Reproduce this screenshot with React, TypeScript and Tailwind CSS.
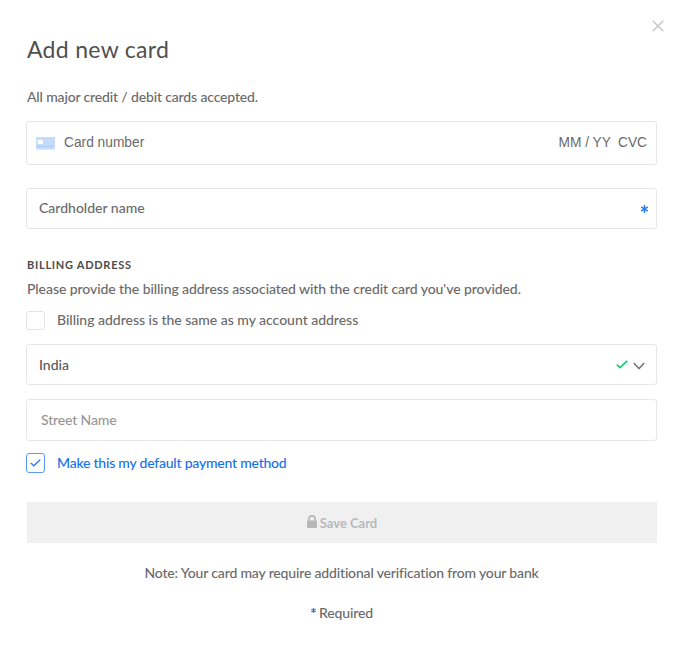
import type { ReactNode } from "react";

function Field({ className, children }: { className: string; children: ReactNode }) {
  return (
    <div className={`flex items-center rounded-[3px] border border-[#e7e7e7] bg-white ${className}`}>
      {children}
    </div>
  );
}

function CardIcon() {
  return (
    <svg width="19" height="13" viewBox="0 0 19 13" className="shrink-0">
      <rect width="19" height="12.5" rx="1" fill="#c4dcfc" />
      <rect x="1.5" y="2.8" width="5.5" height="4.2" rx="1.2" fill="#ffffff" />
      <path d="M1.5 9.5h3M5.7 9.5h3M9.9 9.5h3M14.1 9.5h3" stroke="#a9c6ee" strokeWidth="1.2" />
    </svg>
  );
}

export default function App() {
  return (
    <main className="flex h-[648px] w-[680px] flex-col bg-white pr-[23px] pl-[26px] font-['Lato',sans-serif] text-[14px] leading-5 font-medium text-[#6a6a6a]">
      <header className="flex h-[87px] shrink-0 justify-between">
        <h1 className="mt-[34px] ml-px text-[23px] leading-[30px] font-normal tracking-[0.3px] text-[#505050]">Add new card</h1>
        <button aria-label="Close" className="mt-5 mr-[-7px] h-3 w-3">
          <svg width="12" height="12" viewBox="0 0 12 12" fill="none" stroke="#c6c6c6" strokeWidth="1.5">
            <path d="M.7.7l10.6 10.6M11.3.7L.7 11.3" />
          </svg>
        </button>
      </header>
      <p className="ml-px tracking-[-0.15px]">All major credit / debit cards accepted.</p>
      <Field className="mt-[14px] h-[44px] shrink-0 pr-[9px] pl-[9px] font-['Liberation_Sans',sans-serif] text-[13.75px] font-normal">
        <CardIcon />
        <span className="mb-px ml-[9px]">Card number</span>
        <span className="mb-px ml-auto">MM / YY</span>
        <span className="mb-px ml-[7px]">CVC</span>
      </Field>
      <Field className="mt-[23px] h-[41px] shrink-0 justify-between pr-[8px] pl-3">
        <span className="mb-0.5">Cardholder name</span>
        <svg width="7" height="8" viewBox="0 0 7 8" stroke="#2f80ee" strokeWidth="1.5">
          <path d="M3.5 0v8M.2 2l6.6 4M6.8 2L.2 6" />
        </svg>
      </Field>
      <h2 className="mt-[26px] ml-px text-[11px] font-bold tracking-[0.73px] text-[#4c4c4c]">BILLING ADDRESS</h2>
      <p className="mt-1 ml-px tracking-[-0.075px]">Please provide the billing address associated with the credit card you've provided.</p>
      <div className="mt-[11px] flex h-5 items-center">
        <span className="h-[19px] w-[19px] rounded-[3px] border border-[#e5e5e5]" />
        <span className="ml-3 tracking-[-0.02px]">Billing address is the same as my account address</span>
      </div>
      <Field className="mt-[14px] h-[41px] shrink-0 pr-[11px] pl-3">
        <span className="text-[#585858]">India</span>
        <svg className="ml-auto" width="12" height="9" viewBox="0 0 12 9" fill="none" stroke="#20c67a" strokeWidth="1.7">
          <path d="M.8 4.6l3.3 3L11.2.9" />
        </svg>
        <svg className="mt-0.5 ml-[5px]" width="12" height="8" viewBox="0 0 12 8" fill="none" stroke="#777777" strokeWidth="1.6">
          <path d="M.8 1L6 6.5 11.2 1" />
        </svg>
      </Field>
      <Field className="mt-[14px] h-[42px] shrink-0 pl-[14px]">
        <span className="tracking-[-0.15px] text-[#979797]">Street Name</span>
      </Field>
      <div className="mt-3 flex h-5 items-center text-[#1570ec]">
        <span className="flex h-5 w-[19px] items-center justify-center rounded-[3px] border border-[#5c9bf3]">
          <svg width="11" height="8" viewBox="0 0 11 8" fill="none" stroke="#2f7eec" strokeWidth="1.4">
            <path d="M.8 4l3 2.8L10.2.8" />
          </svg>
        </span>
        <span className="ml-3 tracking-[-0.22px]">Make this my default payment method</span>
      </div>
      <button className="mt-[29px] ml-px flex h-[41px] shrink-0 items-center justify-center bg-[#f0f0f0] text-[13px] font-bold text-[#b9b9b9]">
        <svg width="10" height="13" viewBox="0 0 10 13" className="mr-[3px] mb-0.5">
          <path d="M2 6V3.8a3 3 0 0 1 6 0V6" fill="none" stroke="#b6b6b6" strokeWidth="1.7" />
          <rect y="5.5" width="10" height="7.5" rx="1" fill="#b6b6b6" />
        </svg>
        <span>Save Card</span>
      </button>
      <p className="mt-5 text-center tracking-[-0.165px]">Note: Your card may require additional verification from your bank</p>
      <p className="mt-5 ml-px flex justify-center tracking-[-0.1px]">
        <svg width="5" height="5" viewBox="0 0 5 5" className="mt-[5px] mr-[3px]" stroke="#2f80ee" strokeWidth="1.2">
          <path d="M2.5 0v5M.3 1.2l4.4 2.6M4.7 1.2L.3 3.8" />
        </svg>
        Required
      </p>
    </main>
  );
}
